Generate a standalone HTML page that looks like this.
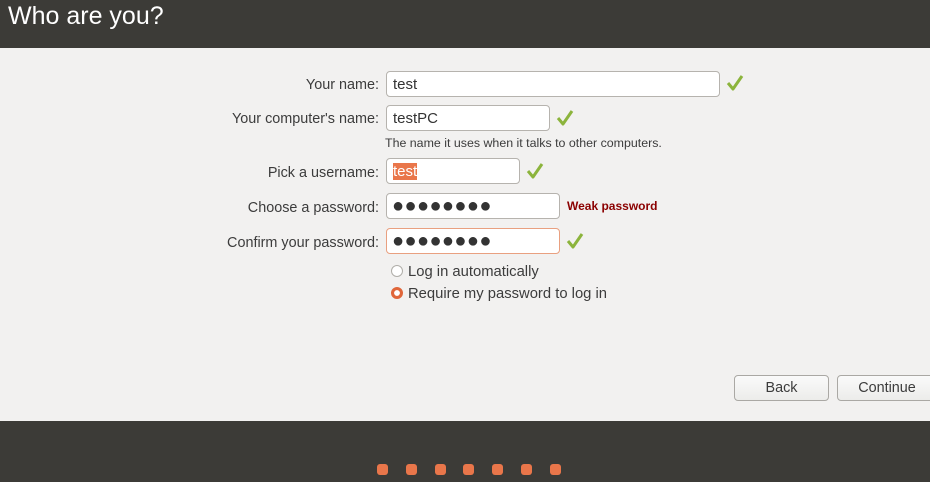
<!DOCTYPE html><html><head><style>
body{margin:0;width:930px;height:482px;overflow:hidden;background:#f2f1f0;font-family:"Liberation Sans",sans-serif;position:relative;color:#3c3c3c}
.a{position:absolute}
.hdr{left:0;top:0;width:930px;height:48px;background:#3c3b37;color:#fff;font-size:25px}
.ftr{left:0;top:421px;width:930px;height:61px;background:#3c3b37}
.lbl{font-size:14.4px;text-align:right;right:551px;width:300px}
.in{box-sizing:border-box;border:1px solid #b6b3ae;border-radius:4px;background:#fff;height:26px;left:386px;font-size:15px;padding:4px 6px;color:#333}
.ck{width:18px;height:18px}
.dots{font-size:20px;letter-spacing:0.4px;color:#333;line-height:16px;padding-left:5px}
.btn{box-sizing:border-box;border:1px solid #aaa8a4;border-radius:4px;background:linear-gradient(#fafafa,#ececea);height:26px;top:375px;font-size:14.4px;text-align:center;line-height:25px}
.dot{width:11px;height:11px;border-radius:3px;background:#e9764a;top:464px}
.rad{left:391px;width:12px;height:12px;border-radius:50%;box-sizing:border-box}
.rt{left:408px;font-size:14.8px}
</style></head><body>
<div class="a hdr"><span class="a" style="left:8px;top:2px">Who are you?</span></div>
<div class="a lbl" style="top:77px">Your name:</div>
<div class="a in" style="top:71px;width:334px">test</div>
<div class="a lbl" style="top:111px">Your computer's name:</div>
<div class="a in" style="top:105px;width:164px">testPC</div>
<div class="a" style="left:385px;top:136px;font-size:12.4px">The name it uses when it talks to other computers.</div>
<div class="a lbl" style="top:165px">Pick a username:</div>
<div class="a in" style="top:158px;width:134px"><span style="background:#e9764a;color:#fff">test</span></div>
<div class="a lbl" style="top:200px">Choose a password:</div>
<div class="a in dots" style="top:193px;width:174px">●●●●●●●●</div>
<div class="a" style="left:567px;top:199px;font-size:12px;font-weight:bold;color:#8b0000">Weak password</div>
<div class="a lbl" style="top:235px">Confirm your password:</div>
<div class="a in dots" style="top:228px;width:174px;border-color:#e9a080">●●●●●●●●</div>
<svg class="a ck" style="left:726px;top:74px" viewBox="0 0 18 18"><path d="M2 9 L7 15 L16 2" fill="none" stroke="#8cb43c" stroke-width="3" stroke-linejoin="round"/></svg>
<svg class="a ck" style="left:556px;top:109px" viewBox="0 0 18 18"><path d="M2 9 L7 15 L16 2" fill="none" stroke="#8cb43c" stroke-width="3" stroke-linejoin="round"/></svg>
<svg class="a ck" style="left:526px;top:162px" viewBox="0 0 18 18"><path d="M2 9 L7 15 L16 2" fill="none" stroke="#8cb43c" stroke-width="3" stroke-linejoin="round"/></svg>
<svg class="a ck" style="left:566px;top:232px" viewBox="0 0 18 18"><path d="M2 9 L7 15 L16 2" fill="none" stroke="#8cb43c" stroke-width="3" stroke-linejoin="round"/></svg>
<div class="a rad" style="top:265px;border:1px solid #b0aea9;background:#fff"></div>
<div class="a rt" style="top:264px">Log in automatically</div>
<div class="a rad" style="top:287px;background:#e0663a;border:3px solid #e0663a;box-shadow:inset 0 0 0 3px #fff"></div>
<div class="a rt" style="top:286px">Require my password to log in</div>
<div class="a btn" style="left:734px;width:95px">Back</div>
<div class="a btn" style="left:837px;width:100px">Continue</div>
<div class="a ftr"></div>
<div class="a dot" style="left:377px"></div><div class="a dot" style="left:406px"></div><div class="a dot" style="left:435px"></div><div class="a dot" style="left:463px"></div><div class="a dot" style="left:492px"></div><div class="a dot" style="left:521px"></div><div class="a dot" style="left:550px"></div>
</body></html>
